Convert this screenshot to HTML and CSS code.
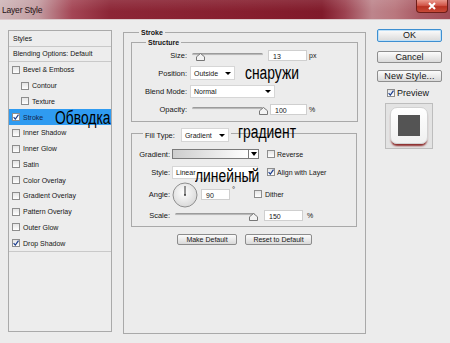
FILE: index.html
```html
<!DOCTYPE html>
<html>
<head>
<meta charset="utf-8">
<title>Layer Style</title>
<link rel="stylesheet" href="styles.css">
</head>
<body>
<div class="titlebar">
  <span class="title">Layer Style</span>
  <div class="close"><svg width="10" height="8" viewBox="0 0 10 8"><path d="M2 1 L8 7 M8 1 L2 7" stroke="#fff" stroke-width="2"/></svg></div>
</div>
<div class="content">
  <div class="styles">
    <div class="sp-head">Styles</div>
    <div class="sp-blend">Blending Options: Default</div>
    <div class="sp-row"><span class="cb"></span>Bevel &amp; Emboss</div>
    <div class="sp-row sub"><span class="cb"></span>Contour</div>
    <div class="sp-row sub"><span class="cb"></span>Texture</div>
    <div class="sp-row sel"><span class="cb"><svg width="6" height="6" viewBox="0 0 6 6"><path d="M0.6 3.2 L2.3 5.1 L5.5 0.6" fill="none" stroke="#1d3f8f" stroke-width="1.2"/></svg></span>Stroke</div>
    <div class="sp-row"><span class="cb"></span>Inner Shadow</div>
    <div class="sp-row"><span class="cb"></span>Inner Glow</div>
    <div class="sp-row"><span class="cb"></span>Satin</div>
    <div class="sp-row"><span class="cb"></span>Color Overlay</div>
    <div class="sp-row"><span class="cb"></span>Gradient Overlay</div>
    <div class="sp-row"><span class="cb"></span>Pattern Overlay</div>
    <div class="sp-row"><span class="cb"></span>Outer Glow</div>
    <div class="sp-row last"><span class="cb"><svg width="6" height="6" viewBox="0 0 6 6"><path d="M0.6 3.2 L2.3 5.1 L5.5 0.6" fill="none" stroke="#1d3f8f" stroke-width="1.2"/></svg></span>Drop Shadow</div>
  </div>

  <div class="main">
    <div class="legend">Stroke</div>
    <div class="box structure">
      <div class="legend">Structure</div>
      <div class="rows">
        <div class="row">
          <span class="lbl">Size:</span>
          <div class="slider s-struct"><div class="track"></div><svg class="thumb" style="left:6px" width="9" height="8" viewBox="0 0 9 8"><path d="M4.5 0.5 L8.5 3.8 L8.5 7.5 L0.5 7.5 L0.5 3.8 Z" fill="#f3f3f3" stroke="#777"/></svg></div>
          <div class="field f-size">13</div>
          <span class="unit">px</span>
        </div>
        <div class="row">
          <span class="lbl">Position:</span>
          <div class="dd dd-pos"><span>Outside</span><span class="arrow"></span></div>
        </div>
        <div class="row">
          <span class="lbl">Blend Mode:</span>
          <div class="dd dd-blend"><span>Normal</span><span class="arrow"></span></div>
        </div>
        <div class="row">
          <span class="lbl">Opacity:</span>
          <div class="slider s-struct"><div class="track"></div><svg class="thumb" style="left:69px" width="9" height="8" viewBox="0 0 9 8"><path d="M4.5 0.5 L8.5 3.8 L8.5 7.5 L0.5 7.5 L0.5 3.8 Z" fill="#f3f3f3" stroke="#777"/></svg></div>
          <div class="field f-op">100</div>
          <span class="unit">%</span>
        </div>
      </div>
    </div>

    <div class="box fill">
      <div class="legend fill-legend"><span>Fill Type:</span><div class="dd dd-fill"><span>Gradient</span><span class="arrow"></span></div></div>
      <div class="row r-grad">
        <span class="lbl2">Gradient:</span>
        <div class="gradbox"><div class="gradfill"></div><div class="gradarrow"><span class="arrow big"></span></div></div>
        <span class="cb cb-gap"></span><span class="cbtext">Reverse</span>
      </div>
      <div class="row r-style">
        <span class="lbl2">Style:</span>
        <div class="dd dd-style"><span>Linear</span><span class="arrow"></span></div>
        <span class="cb cb-gap2"><svg width="6" height="6" viewBox="0 0 6 6"><path d="M0.6 3.2 L2.3 5.1 L5.5 0.6" fill="none" stroke="#1d3f8f" stroke-width="1.2"/></svg></span><span class="cbtext">Align with Layer</span>
      </div>
      <div class="row r-angle">
        <span class="lbl2">Angle:</span>
        <svg class="dial" width="26" height="26" viewBox="0 0 26 26"><defs><radialGradient id="dg" cx="45%" cy="40%" r="65%"><stop offset="0" stop-color="#ffffff"/><stop offset="1" stop-color="#d6d6d6"/></radialGradient></defs><circle cx="13" cy="13" r="12" fill="url(#dg)" stroke="#8f8f8f"/><line x1="13" y1="13" x2="13" y2="4" stroke="#333" stroke-width="1"/><circle cx="13" cy="13" r="0.9" fill="#333"/></svg>
        <div class="field f-angle">90</div>
        <span class="deg">°</span>
        <span class="cb cb-dither"></span><span class="cbtext">Dither</span>
      </div>
      <div class="row r-scale">
        <span class="lbl2">Scale:</span>
        <div class="slider s-scale"><div class="track"></div><svg class="thumb" style="left:77px" width="9" height="8" viewBox="0 0 9 8"><path d="M4.5 0.5 L8.5 3.8 L8.5 7.5 L0.5 7.5 L0.5 3.8 Z" fill="#f3f3f3" stroke="#777"/></svg></div>
        <div class="field f-scale">150</div>
        <span class="unit u-scale">%</span>
      </div>
    </div>

    <div class="btnrow">
      <div class="btn b-make">Make Default</div>
      <div class="btn b-reset">Reset to Default</div>
    </div>
  </div>

  <div class="side">
    <div class="sbtn ok">OK</div>
    <div class="sbtn cancel">Cancel</div>
    <div class="sbtn newstyle">New Style...</div>
    <div class="prevrow"><span class="cb"><svg width="6" height="6" viewBox="0 0 6 6"><path d="M0.6 3.2 L2.3 5.1 L5.5 0.6" fill="none" stroke="#1d3f8f" stroke-width="1.2"/></svg></span><span>Preview</span></div>
    <div class="preview"><div class="tile"><div class="sq"></div></div></div>
  </div>
</div>

<span class="note n-stroke">Обводка</span>
<span class="note n-out">снаружи</span>
<span class="note n-grad">градиент</span>
<span class="note n-lin">линейный</span>
</body>
</html>
```

FILE: styles.css
```css
* { box-sizing: border-box; margin: 0; padding: 0; }
html, body { width: 450px; height: 343px; overflow: hidden; }
body {
  background: #ececec;
  font-family: "Liberation Sans", Arial, sans-serif;
  font-size: 7px;
  color: #151515;
  position: relative;
}

/* title bar */
.titlebar {
  height: 20px;
  display: flex;
  align-items: flex-start;
  justify-content: space-between;
  border-bottom: 1px solid #dccbcd;
  background:
    linear-gradient(to bottom, rgba(255,255,255,0.10), rgba(255,255,255,0) 60%),
    linear-gradient(90deg, #cfb7b9 0px, #c39ca1 38px, #a44655 72px, #8c2636 110px, #861e2e 250px, #801a2a 322px, #9c4250 345px, #bd858c 372px, #b9777e 395px, #a95963 420px, #a04c57 450px);
}
.title {
  font-size: 8.5px;
  letter-spacing: -0.2px;
  color: #241214;
  padding: 5px 0 0 2px;
}
.close {
  width: 32px;
  height: 13px;
  margin-right: 2px;
  border: 1px solid #6e1d18;
  border-top: none;
  border-radius: 0 0 4px 4px;
  background: linear-gradient(#e9968a, #d2574a 45%, #b93222 55%, #c84a38);
  display: flex;
  align-items: center;
  justify-content: center;
}

.content {
  display: flex;
  align-items: flex-start;
  padding: 10px 0 0 8px;
}

/* styles list */
.styles {
  width: 104px;
  height: 302px;
  border: 1px solid #aaaaaa;
  background: #ededed;
  margin-right: 11px;
  flex: none;
}
.sp-head {
  height: 16px;
  line-height: 15px;
  padding-left: 4px;
  border-bottom: 1px solid #c9c9c9;
}
.sp-blend {
  height: 15px;
  line-height: 14px;
  padding-left: 4px;
  border-bottom: 1px solid #c9c9c9;
}
.sp-row {
  height: 15.75px;
  display: flex;
  align-items: center;
  padding-left: 3px;
}
.sp-row.sub { padding-left: 12px; }
.sp-row.sel { background: #2f9bf1; color: #14264a; }
.sp-row.last { border-bottom: 1px solid #c9c9c9; height: 16.5px; }

.cb {
  width: 8px;
  height: 8px;
  border: 1px solid #8d8d8d;
  background: linear-gradient(#e4e4e4, #ffffff);
  display: flex;
  align-items: center;
  justify-content: center;
  flex: none;
  margin-right: 3px;
}
.sp-row.sel .cb { background: #fff; }

/* main group */
.main {
  width: 243px;
  height: 302px;
  border: 1px solid #a9a9a9;
  margin-top: 2px;
  margin-right: 11px;
  padding: 0 7px;
  flex: none;
  font-size: 7.5px;
}
.legend {
  width: fit-content;
  height: 9px;
  line-height: 9px;
  margin: -5px 0 0 8px;
  padding: 0 2px;
  background: #ececec;
  font-weight: bold;
  font-size: 7px;
}
.box {
  border: 1px solid #a9a9a9;
}
.structure {
  width: 227px;
  height: 80px;
  margin-top: 5px;
}
.structure .legend { margin-left: 14px; }
.rows { margin-top: -1px; }
.row {
  height: 18px;
  display: flex;
  align-items: center;
}
.lbl {
  width: 55px;
  margin-right: 3px;
  text-align: right;
  flex: none;
}
.lbl2 {
  width: 38px;
  margin-right: 2px;
  text-align: right;
  flex: none;
}

.slider {
  position: relative;
  height: 12px;
  flex: none;
}
.s-struct { width: 75px; }
.s-scale { width: 86px; }
.track {
  margin: 4px 2px 0;
  height: 3px;
  border-radius: 2px;
  background: linear-gradient(#8c8c8c, #c8c8c8);
  border-bottom: 1px solid #e8e8e8;
}
.s-scale .track { margin: 4px 3px 0; }
.thumb {
  position: absolute;
  top: 4px;
}

.field {
  height: 11px;
  line-height: 11px;
  background: #fff;
  border: 1px solid #cfcfcf;
  padding-left: 4px;
  font-size: 7px;
  flex: none;
}
.f-size { width: 39px; margin-left: 3px; }
.f-op { width: 37px; margin-left: 5px; }
.f-angle { width: 29px; margin-left: 3px; }
.f-scale { width: 39px; margin-left: 6px; }
.unit { margin-left: 2px; font-size: 7px; }
.u-scale { margin-left: 4px; }

.dd {
  display: flex;
  align-items: center;
  justify-content: space-between;
  background: #fff;
  border: 1px solid #d6d6d6;
  padding: 0 3px 0 3px;
  font-size: 7px;
  flex: none;
}
.dd-pos { width: 45px; height: 14px; }
.dd-blend { width: 85px; height: 13px; }
.dd-fill { width: 48px; height: 14px; margin-left: 6px; }
.dd-style { width: 86px; height: 13px; }
.arrow {
  width: 0;
  height: 0;
  border-left: 3px solid transparent;
  border-right: 3px solid transparent;
  border-top: 3px solid #000;
}
.arrow.big {
  border-left-width: 3.5px;
  border-right-width: 3.5px;
  border-top-width: 4px;
}

/* fill group */
.fill {
  width: 226px;
  height: 94px;
  margin-top: 11px;
}
.fill-legend {
  display: flex;
  align-items: center;
  height: 14px;
  margin: -6px 0 0 11px;
  font-weight: normal;
  font-size: 7.5px;
}
.r-grad { margin-top: 3px; height: 18px; }
.r-style { height: 18px; }
.r-angle { height: 26px; }
.r-scale { height: 16px; }

.gradbox {
  width: 87px;
  height: 10px;
  border: 1px solid #7a7a7a;
  display: flex;
  flex: none;
}
.gradfill {
  flex: 1;
  background: linear-gradient(90deg, #cdcdcd, #ffffff);
}
.gradarrow {
  width: 10px;
  background: #fff;
  border-left: 1px solid #7a7a7a;
  display: flex;
  align-items: center;
  justify-content: center;
}
.cb-gap { margin-left: 8px; margin-right: 2px; }
.cb-gap2 { margin-left: 9px; margin-right: 2px; }
.cb-dither { margin-left: 14px; margin-right: 3px; }
.cbtext { font-size: 7px; }
.dial { flex: none; margin-top: 1px; }
.deg {
  width: 8px;
  margin-left: 2px;
  align-self: flex-start;
  margin-top: 4px;
  font-size: 8px;
}

.btnrow {
  display: flex;
  justify-content: center;
  gap: 8px;
  margin-top: 7px;
}
.btn {
  height: 11px;
  line-height: 9px;
  border: 1px solid #8c8c8c;
  border-radius: 2px;
  background: linear-gradient(#fbfbfb, #d9d9d9);
  text-align: center;
  font-size: 7px;
}
.b-make { width: 60px; }
.b-reset { width: 67px; }

/* side column */
.side {
  width: 65px;
  margin-top: -1px;
  flex: none;
  font-size: 9px;
}
.sbtn {
  height: 12px;
  line-height: 10px;
  border: 1px solid #8e8e8e;
  border-radius: 2px;
  background: linear-gradient(#fcfcfc, #dadada);
  text-align: center;
  font-size: 9px;
}
.ok {
  height: 13px;
  line-height: 11px;
  border-color: #3d8fd1;
  box-shadow: inset 0 0 0 1px #bfe0f7;
}
.cancel { margin-top: 9px; }
.newstyle { margin-top: 7px; letter-spacing: 0.2px; }
.prevrow {
  display: flex;
  align-items: center;
  height: 9px;
  margin-top: 6px;
  padding-left: 10px;
}
.prevrow .cb { margin-right: 2px; }
.preview {
  width: 48px;
  height: 46px;
  margin: 6px 0 0 8px;
  border: 1px solid #bdbdbd;
  background: #e3e3e3;
  display: flex;
  justify-content: center;
  padding-top: 3px;
}
.tile {
  width: 38px;
  height: 37px;
  border-radius: 7px;
  border: 1px solid #d2d2d2;
  background: linear-gradient(#ffffff, #f0f0f0);
  box-shadow: 0 3px 2px -1px rgba(125, 8, 8, 0.85);
  display: flex;
  align-items: center;
  justify-content: center;
}
.sq {
  width: 22px;
  height: 21px;
  background: #545454;
}

/* annotations */
.note {
  position: absolute;
  font-size: 18px;
  line-height: 18px;
  color: #000;
  white-space: nowrap;
  transform: scaleX(0.77);
  transform-origin: 0 0;
}
.n-stroke { left: 55px; top: 109px; }
.n-out { left: 245px; top: 64px; }
.n-grad { left: 238px; top: 123px; }
.n-lin { left: 195px; top: 167px; }
```
